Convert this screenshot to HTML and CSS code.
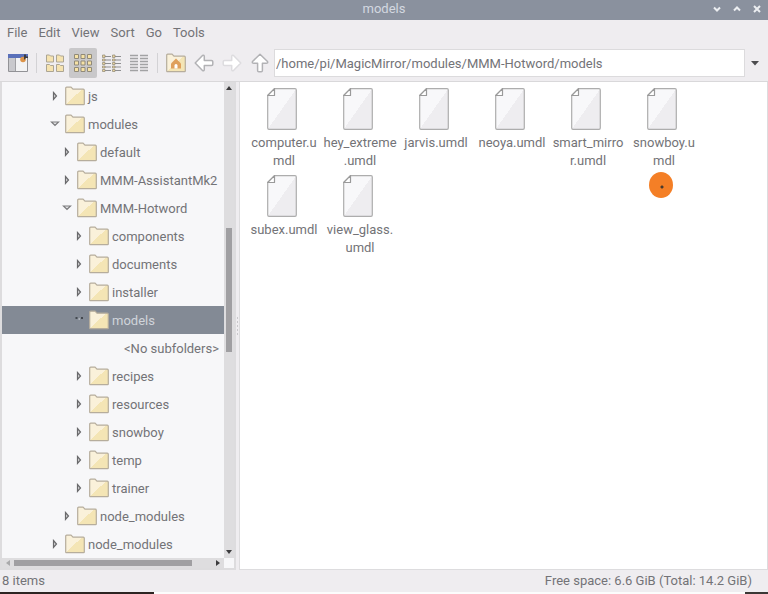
FILE: index.html
```
<!DOCTYPE html>
<html lang="en">
<head>
  <meta charset="UTF-8">
  <meta name="viewport" content="width=device-width, initial-scale=1.0">
  <title>models</title>
  <link rel="stylesheet" href="styles.css">
</head>
<body>
  <svg class="defs" aria-hidden="true">
    <defs>
      <linearGradient id="paper" x1="0" y1="0" x2="1" y2="1">
        <stop offset="0.5" stop-color="#f8f8fa"/>
        <stop offset="0.5" stop-color="#eeedf0"/>
      </linearGradient>
      <linearGradient id="manila" x1="0" y1="0" x2="1" y2="1">
        <stop offset="0.5" stop-color="#faf1da"/>
        <stop offset="0.5" stop-color="#f4e5b5"/>
      </linearGradient>
    </defs>
    <symbol id="folder" viewBox="0 0 20 20">
      <path d="M.7 18V2.2Q.7 1.2 1.7 1.2H6L8 3.2H18.3Q19.3 3.2 19.3 4.2V18Q19.3 18.6 18.6 18.6H1.4Q.7 18.6.7 18Z" fill="url(#manila)" stroke="#b6ad9c" stroke-width="1.2"/>
    </symbol>
    <symbol id="file" viewBox="0 0 30 42">
      <path d="M7.5.7H28Q29.3.7 29.3 2V40Q29.3 41.3 28 41.3H2Q.7 41.3.7 40V7.5Z" fill="url(#paper)" stroke="#adadad" stroke-width="1.2"/>
      <path d="M7.5.7V7.5H.7Z" fill="#fff" stroke="#9a9a9a" stroke-width="1.2" stroke-linejoin="round"/>
    </symbol>
    <symbol id="closed" viewBox="0 0 12 12">
      <path d="M4.5 2.5L7.5 6L4.5 9.5Z" fill="#d4d4d6" stroke="#6a6a6c" stroke-width="1.2"/>
    </symbol>
    <symbol id="opened" viewBox="0 0 12 12">
      <path d="M2.5 4H9.5L6 7.5Z" fill="#e4e4e6" stroke="#7c7c7e" stroke-width="1.2"/>
    </symbol>
    <symbol id="opened-selected" viewBox="0 0 12 12">
      <path d="M2.5 4h2M8 4h2" stroke="#2f3338" stroke-width="1.6"/>
      <path d="M5.5 5h1.5" stroke="#d5d9de"/>
    </symbol>
    <symbol id="arrow" viewBox="0 0 20 20">
      <path d="M1.2 10L8.5 2.5Q10.3 1.8 10.3 3.8V7.6H17.5Q18.8 7.6 18.8 8.8V11.2Q18.8 12.4 17.5 12.4H10.3V16.2Q10.3 18.2 8.5 17.5Z" fill="#fff" stroke="currentColor" stroke-width="1.5" stroke-linejoin="round"/>
    </symbol>
  </svg>

  <div class="window">
    <header class="titlebar">
      <h1>models</h1>
      <div class="window-buttons">
        <button aria-label="Minimize"><svg viewBox="0 0 10 10"><path d="M2 3.5L5 6.5L8 3.5"/></svg></button>
        <button aria-label="Maximize"><svg viewBox="0 0 10 10"><path d="M2 6.5L5 3.5L8 6.5"/></svg></button>
        <button aria-label="Close"><svg viewBox="0 0 10 10"><path d="M2 2L8 8M8 2L2 8"/></svg></button>
      </div>
    </header>

    <nav class="menubar">
      <button>File</button>
      <button>Edit</button>
      <button>View</button>
      <button>Sort</button>
      <button>Go</button>
      <button>Tools</button>
    </nav>

    <div class="toolbar">
      <button class="tool" aria-label="New window">
        <svg viewBox="0 0 20 20">
          <path d="M.5 1.5H19.5V18.5H.5Z" fill="#f3f3f4" stroke="#929296"/>
          <path d="M1 5H7.5V18H1Z" fill="#c9c9cd"/>
          <path d="M7.5 5V18" stroke="#a0a0a4"/>
          <path d="M0 1H20V5H0Z" fill="#5a70ba"/>
          <circle cx="15" cy="6.5" r="2.8" fill="#dd9448"/>
          <path d="M16 1.5h2v2h2v1.5h-2l-2 2z" fill="#3b3b40"/>
        </svg>
      </button>
      <span class="divider"></span>
      <button class="tool" aria-label="Icon view">
        <svg viewBox="0 0 20 20" fill="#f6e3b0" stroke="#aca593">
          <path d="M1.5 2h3l1 1h3v6h-7zM11.5 2h3l1 1h3v6h-7zM1.5 11.5h3l1 1h3v6h-7zM11.5 11.5h3l1 1h3v6h-7z"/>
        </svg>
      </button>
      <button class="tool active" aria-label="Small icon view">
        <svg viewBox="0 0 20 20" fill="#f6e2a5" stroke="#918a79">
          <path d="M1.5 1.5h4v4h-4zM8 1.5h4v4h-4zM14.5 1.5h4v4h-4zM1.5 8h4v4h-4zM8 8h4v4h-4zM14.5 8h4v4h-4zM1.5 14.5h4v4h-4zM8 14.5h4v4h-4zM14.5 14.5h4v4h-4z"/>
        </svg>
      </button>
      <button class="tool" aria-label="Compact view">
        <svg viewBox="0 0 20 20">
          <path d="M4 3.5h6M4 7h6M4 10.5h6M4 14h6M4 17.5h6M14 3.5h6M14 7h6M14 10.5h6M14 14h6M14 17.5h6" stroke="#8f8f91" stroke-width="1.2"/>
          <path d="M1.5 2H4v2.5H1.500zM1.5 6H4v2H1.500zM1.5 9.5H4v2H1.500zM1.5 13H4v2H1.500zM1.5 16.5H4v2H1.500zM11.5 2H14v2.5h-2.500zM11.5 6H14v2h-2.500zM11.5 9.5H14v2h-2.500zM11.5 13H14v2h-2.500zM11.5 16.5H14v2h-2.500z" fill="#ead39b" stroke="#8f8877" stroke-width=".7"/>
        </svg>
      </button>
      <button class="tool" aria-label="Detailed list view">
        <svg viewBox="0 0 20 20">
          <path d="M1 2.5h8M1 5.5h8M1 8.5h8M1 11.5h8M1 14.5h8M1 17.5h8M11 2.5h8M11 5.5h8M11 8.5h8M11 11.5h8M11 14.5h8M11 17.5h8" stroke="#a2a2a4" stroke-width="1.4"/>
        </svg>
      </button>
      <span class="divider"></span>
      <button class="tool" aria-label="Home">
        <svg viewBox="0 0 20 20">
          <use href="#folder"/>
          <path d="M10 5.5L15 10.5V15.5H5V10.5Z" fill="#dfa05c"/>
          <path d="M8.5 15.5V12Q10 10 11.5 12V15.5Z" fill="#fff"/>
        </svg>
      </button>
      <button class="tool arrow" aria-label="Back"><svg viewBox="0 0 20 20"><use href="#arrow"/></svg></button>
      <button class="tool arrow faded" aria-label="Forward"><svg viewBox="0 0 20 20"><use href="#arrow" transform="rotate(180 10 10)"/></svg></button>
      <button class="tool arrow" aria-label="Up"><svg viewBox="0 0 20 20"><use href="#arrow" transform="rotate(90 10 10)"/></svg></button>
      <input class="path" type="text" aria-label="Location" value="/home/pi/MagicMirror/modules/MMM-Hotword/models">
      <button class="path-list" aria-label="Show history"><svg viewBox="0 0 8 6"><path d="M0 1H8L4 5.5Z"/></svg></button>
    </div>

    <main class="panes">
      <aside class="side">
        <ul class="tree">
          <li class="level-1"><svg class="twist"><use href="#closed"/></svg><svg class="folder"><use href="#folder"/></svg>js</li>
          <li class="level-1"><svg class="twist"><use href="#opened"/></svg><svg class="folder"><use href="#folder"/></svg>modules</li>
          <li class="level-2"><svg class="twist"><use href="#closed"/></svg><svg class="folder"><use href="#folder"/></svg>default</li>
          <li class="level-2"><svg class="twist"><use href="#closed"/></svg><svg class="folder"><use href="#folder"/></svg>MMM-AssistantMk2</li>
          <li class="level-2"><svg class="twist"><use href="#opened"/></svg><svg class="folder"><use href="#folder"/></svg>MMM-Hotword</li>
          <li class="level-3"><svg class="twist"><use href="#closed"/></svg><svg class="folder"><use href="#folder"/></svg>components</li>
          <li class="level-3"><svg class="twist"><use href="#closed"/></svg><svg class="folder"><use href="#folder"/></svg>documents</li>
          <li class="level-3"><svg class="twist"><use href="#closed"/></svg><svg class="folder"><use href="#folder"/></svg>installer</li>
          <li class="level-3 selected"><svg class="twist"><use href="#opened-selected"/></svg><svg class="folder"><use href="#folder"/></svg>models</li>
          <li class="level-4">&lt;No subfolders&gt;</li>
          <li class="level-3"><svg class="twist"><use href="#closed"/></svg><svg class="folder"><use href="#folder"/></svg>recipes</li>
          <li class="level-3"><svg class="twist"><use href="#closed"/></svg><svg class="folder"><use href="#folder"/></svg>resources</li>
          <li class="level-3"><svg class="twist"><use href="#closed"/></svg><svg class="folder"><use href="#folder"/></svg>snowboy</li>
          <li class="level-3"><svg class="twist"><use href="#closed"/></svg><svg class="folder"><use href="#folder"/></svg>temp</li>
          <li class="level-3"><svg class="twist"><use href="#closed"/></svg><svg class="folder"><use href="#folder"/></svg>trainer</li>
          <li class="level-2"><svg class="twist"><use href="#closed"/></svg><svg class="folder"><use href="#folder"/></svg>node_modules</li>
          <li class="level-1"><svg class="twist"><use href="#closed"/></svg><svg class="folder"><use href="#folder"/></svg>node_modules</li>
        </ul>
        <div class="scroll-y">
          <svg viewBox="0 0 8 6"><path d="M1 5H7L4 1Z"/></svg>
          <div class="track"><div class="thumb"></div></div>
          <svg viewBox="0 0 8 6"><path d="M1 1H7L4 5Z"/></svg>
        </div>
        <div class="scroll-x">
          <svg class="off" viewBox="0 0 6 8"><path d="M5 1V7L1 4Z"/></svg>
          <div class="track"><div class="thumb"></div></div>
          <svg viewBox="0 0 6 8"><path d="M1 1V7L5 4Z"/></svg>
        </div>
      </aside>
      <div class="splitter"></div>
      <section class="content">
        <ul class="files">
          <li><svg><use href="#file"/></svg><span>computer.u<br>mdl</span></li>
          <li><svg><use href="#file"/></svg><span>hey_extreme<br>.umdl</span></li>
          <li><svg><use href="#file"/></svg><span>jarvis.umdl</span></li>
          <li><svg><use href="#file"/></svg><span>neoya.umdl</span></li>
          <li><svg><use href="#file"/></svg><span>smart_mirro<br>r.umdl</span></li>
          <li class="pointed"><svg><use href="#file"/></svg><span>snowboy.u<br>mdl</span><i class="pointer"></i></li>
          <li><svg><use href="#file"/></svg><span>subex.umdl</span></li>
          <li><svg><use href="#file"/></svg><span>view_glass.<br>umdl</span></li>
        </ul>
      </section>
    </main>

    <footer class="statusbar">
      <span>8 items</span>
      <span>Free space: 6.6 GiB (Total: 14.2 GiB)</span>
    </footer>
  </div>
  <div class="desktop"></div>
</body>
</html>
```
FILE: styles.css
```
* {
  box-sizing: border-box;
}
body {
  margin: 0;
  min-height: 100vh;
  display: flex;
  flex-direction: column;
  font-family: Roboto, "Liberation Sans", sans-serif;
  font-size: 13px;
  color: #737377;
  background: #efedf0;
}
ul {
  list-style: none;
  margin: 0;
  padding: 0;
}
button {
  border: none;
  background: none;
  padding: 0;
  font: inherit;
  color: inherit;
}
svg {
  display: block;
  flex: none;
}
.defs {
  position: absolute;
  width: 0;
  height: 0;
}
.window {
  flex: 1;
  display: flex;
  flex-direction: column;
}

.titlebar {
  display: grid;
  grid-template-columns: 1fr auto 1fr;
  align-items: center;
  height: 20px;
  padding-bottom: 3px;
  background: #8a919e;
  color: #d3d8e0;
}
.titlebar h1 {
  grid-column: 2;
  margin: 0;
  font-size: 13px;
  font-weight: 400;
  line-height: 17px;
}
.window-buttons {
  display: flex;
  justify-content: flex-end;
  gap: 10px;
  padding-right: 6px;
}
.window-buttons svg {
  width: 10px;
  height: 10px;
  fill: none;
  stroke: #eceef1;
  stroke-width: 2;
}

.menubar {
  display: flex;
  gap: 11px;
  padding: 0 7px;
  height: 25px;
}

.toolbar {
  display: flex;
  align-items: center;
  height: 36px;
  padding: 0 9px 0 4px;
}
.tool {
  display: flex;
  align-items: center;
  justify-content: center;
  width: 28px;
  height: 30px;
}
.tool svg {
  width: 20px;
  height: 20px;
}
.tool.active {
  background: #c9c8ca;
  border-radius: 2px;
}
.tool.arrow {
  color: #b2b2b5;
}
.tool.faded {
  color: #dddcdf;
}
.divider {
  width: 1px;
  height: 20px;
  margin: 0 4px;
  background: #d3d2d5;
}
.path {
  flex: 1;
  min-width: 0;
  height: 28px;
  padding: 0 1px;
  border: 1px solid #dcdbdd;
  background: #fff;
  font: inherit;
  color: inherit;
}
.path-list svg {
  width: 8px;
  height: 6px;
  margin-left: 6px;
  fill: #4c4c4e;
}

.panes {
  flex: 1;
  display: flex;
  border-top: 1px solid #d9d8da;
}
.side {
  display: grid;
  grid-template-columns: minmax(0, 1fr) 10px;
  grid-template-rows: 1fr 10px;
  width: 236px;
  border: solid #dddcde;
  border-width: 0 2px 2px;
  background: #f7f7f9;
}
.tree li {
  display: flex;
  align-items: center;
  height: 28px;
  white-space: nowrap;
}
.tree .twist {
  width: 12px;
  height: 12px;
  margin-right: 4px;
}
.tree .folder {
  width: 20px;
  height: 20px;
  margin-right: 3px;
}
.tree .level-1 {
  padding-left: 47px;
}
.tree .level-2 {
  padding-left: 59px;
}
.tree .level-3 {
  padding-left: 71px;
}
.tree .level-4 {
  padding-left: 122px;
}
.tree .selected {
  background: #838a95;
  color: #d0d4da;
}

.scroll-y,
.scroll-x {
  display: flex;
  align-items: center;
  background: #dedddf;
  fill: #3c3c3e;
}
.scroll-y {
  flex-direction: column;
  padding: 3px 0;
}
.scroll-y svg {
  width: 8px;
  height: 6px;
}
.scroll-y .track {
  display: grid;
  grid-template-rows: 30fr 27fr 43fr;
  flex: 1;
}
.scroll-y .thumb {
  grid-row: 2;
  width: 6px;
  background: #a09fa2;
}
.scroll-x {
  padding: 0 3px;
}
.scroll-x svg {
  width: 6px;
  height: 8px;
}
.scroll-x .off {
  fill: #a9a9ab;
}
.scroll-x .track {
  flex: 1;
  padding: 0 3px;
}
.scroll-x .thumb {
  width: 90%;
  height: 6px;
  background: #a09fa2;
}

.splitter {
  width: 3px;
  height: 20px;
  align-self: center;
  background: radial-gradient(circle, #c9c8cb 1px, transparent 1px) 0 0 / 3px 4px;
}
.content {
  flex: 1;
  border: 1px solid #dddcde;
  border-top: none;
  background: #fff;
}
.files {
  display: grid;
  grid-template-columns: repeat(auto-fill, 76px);
  grid-auto-rows: 87px;
  padding: 6px 6px 0;
}
.files li {
  display: flex;
  flex-direction: column;
  align-items: center;
  line-height: 18px;
  text-align: center;
  white-space: nowrap;
}
.files svg {
  width: 30px;
  height: 42px;
  margin: 0 4px 4px 0;
}
.pointed {
  position: relative;
}
/* click highlight over the last file */
.pointer {
  position: absolute;
  top: 84px;
  left: 23px;
  width: 24px;
  height: 26px;
  border-radius: 50%;
  background: radial-gradient(circle at 13px 15px, #4a3a2c 1px, #f47f26 2px);
}

.statusbar {
  display: flex;
  justify-content: space-between;
  padding: 2px 16px 2px 2px;
  line-height: 18px;
}
.desktop {
  height: 2px;
  background: linear-gradient(to right, #2c2321 20%, #fcfcfc 20%, #fcfcfc 97%, #3b3735 97%);
}
```
